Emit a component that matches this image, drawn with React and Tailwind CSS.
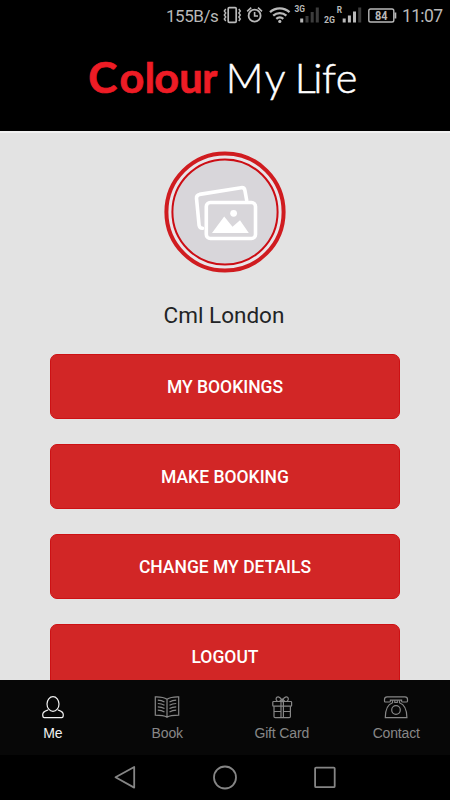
import React, { useState } from "react";

const actions = ["MY BOOKINGS", "MAKE BOOKING", "CHANGE MY DETAILS", "LOGOUT"];

function StatusBar() {
  return (
    <div className="flex h-8 shrink-0 items-center bg-black pl-[166px] font-['Roboto',sans-serif] text-[#b9b9b9]">
      <span className="w-[57px] whitespace-nowrap text-[17px] leading-8 tracking-[-0.45px]">155B/s</span>

      {/* Vibrate, alarm, wifi */}
      <svg className="h-8 w-[70px] shrink-0" viewBox="223 0 70 32" fill="none" stroke="currentColor">
        <rect x="228.2" y="7.7" width="8" height="14.6" rx="1" strokeWidth="1.7" />
        <path d="M225.8 9l-1.5 2 1.5 2-1.5 2 1.5 2-1.5 2 1.5 2M238.8 9l1.5 2-1.5 2 1.5 2-1.5 2 1.5 2-1.5 2" strokeWidth="1.4" />
        <circle cx="254.6" cy="15.7" r="6" strokeWidth="1.8" />
        <path d="M254.6 12v4h3.4M247.2 11.4l4-3.7M262 11.4l-4-3.7" strokeWidth="1.6" />
        <path d="M270 12.2c5.5-5.2 14-5.2 19.5 0M273.2 15.6c3.8-3.4 9.4-3.4 13.2 0M276.3 18.8c2-1.7 5-1.7 7 0" strokeWidth="2.3" />
        <circle cx="279.8" cy="21.4" r="1.6" fill="currentColor" stroke="none" />
      </svg>

      {/* Mobile signals */}
      <svg className="h-8 w-[73px] shrink-0 font-bold" viewBox="293 0 73 32" fill="currentColor">
        <text x="294.5" y="11.5" fontSize="9" textLength="10.5" lengthAdjust="spacingAndGlyphs">3G</text>
        <path d="M300.2 18.5h3v4h-3z" />
        <path d="M305.5 16h3v6.5h-3zM310.7 12h3v10.5h-3zM315.8 7.5h3v15h-3z" fill="#3c3c3c" />
        <text x="324" y="22.8" fontSize="9" textLength="11" lengthAdjust="spacingAndGlyphs">2G</text>
        <text x="336.7" y="12.7" fontSize="9.5" textLength="5.3" lengthAdjust="spacingAndGlyphs">R</text>
        <path d="M342.7 18.5h3v4h-3zM347.9 15.5h3v7h-3zM353 11.5h3v11h-3z" />
        <path d="M358.2 7.5h3v15h-3z" fill="#3c3c3c" />
      </svg>

      {/* Battery */}
      <svg className="h-8 w-9 shrink-0 font-bold" viewBox="366 0 36 32" fill="currentColor">
        <rect x="368.8" y="9" width="25" height="13" rx="1.8" fill="none" stroke="currentColor" strokeWidth="1.4" />
        <path d="M394.5 12.5h1.8v6h-1.8z" />
        <text x="375" y="19.8" fontSize="12" textLength="12.5" lengthAdjust="spacingAndGlyphs">84</text>
      </svg>
      <span className="whitespace-nowrap text-[17.5px] leading-8 tracking-[-0.65px]">11:07</span>
    </div>
  );
}

function Logo() {
  return (
    <header className="h-[99px] shrink-0 bg-black">
      <svg className="h-[99px] w-full font-['Lato',sans-serif]" viewBox="0 32 450 99">
        <text y="92.5" fontSize="41.5" fontWeight="700" fill="#ee1c25" stroke="#ee1c25" strokeWidth="0.7">
          <tspan x="88.3" textLength="29" lengthAdjust="spacingAndGlyphs">C</tspan>
          <tspan x="119.5" textLength="24.8" lengthAdjust="spacingAndGlyphs">o</tspan>
          <tspan x="144.7">l</tspan>
          <tspan x="154.3" textLength="24.8" lengthAdjust="spacingAndGlyphs">o</tspan>
          <tspan x="179.3">u</tspan>
          <tspan x="202.2" textLength="15" lengthAdjust="spacingAndGlyphs">r</tspan>
        </text>
        <text x="225.8 264.8 284 294.8 313.3 322 335.7" y="92.5" fontSize="41.5" fontWeight="300" fill="#fff" stroke="#fff" strokeWidth="0.5">
          My Life
        </text>
      </svg>
    </header>
  );
}

function Avatar() {
  return (
    <svg className="h-[122px] w-[122px] shrink-0" viewBox="164 151.5 122 122" fill="none">
      <circle cx="225" cy="212.5" r="58.6" fill="#e8e5e9" stroke="#d01c20" strokeWidth="4" />
      <circle cx="225" cy="212.5" r="52.6" fill="#d8d6da" stroke="#cc0d14" strokeWidth="2" />
      <g stroke="#fff" strokeWidth="3.6" strokeLinejoin="round">
        <path d="M202.5 228.8q-2.8-.2-3.4-3l-2.6-27q-.2-3.3 3-3.9l41.6-6.7q3.2-.4 3.8 2.6l1.8 10" strokeLinecap="round" />
        <rect x="206.3" y="203" width="49.2" height="36" rx="4" />
      </g>
      <circle cx="233.6" cy="213.8" r="3.4" fill="#fff" />
      <path d="M212 233.5l12.2-16.6 8.3 10.4 7.5-6.6 8.8 12.8z" fill="#fff" />
    </svg>
  );
}

function UserIcon() {
  return (
    <svg className="h-6 w-7" viewBox="0 0 28 24" fill="none" stroke="currentColor" strokeWidth="1.2">
      <ellipse cx="14" cy="9" rx="6" ry="7.4" />
      <path d="M9.2 15c-2.4.7-5.5 1.3-5.5 4.8 0 1.7.5 2.9 1.6 2.9h17.4c1.1 0 1.6-1.2 1.6-2.9 0-3.5-3.1-4.1-5.5-4.8" />
    </svg>
  );
}

function BookIcon() {
  return (
    <svg className="h-6 w-7" viewBox="0 0 28 24" fill="none" stroke="currentColor" strokeWidth="1.2">
      <path d="M14 4.2C11 2.1 7 1.7 2.3 1.8v18.4c4.7 0 8.7.2 11.7 2 3-1.8 7-2 11.7-2V1.8C21 1.7 17 2.1 14 4.2zM14 4.2v18" />
      <path d="M4.8 5.2c2.6 0 4.8.6 6.7 1.8M4.8 8.5c2.6 0 4.8.6 6.7 1.8M4.8 11.8c2.6 0 4.8.6 6.7 1.8M4.8 15.1c2.6 0 4.8.6 6.7 1.8M23.2 5.2c-2.6 0-4.8.6-6.7 1.8M23.2 8.5c-2.6 0-4.8.6-6.7 1.8M23.2 11.8c-2.6 0-4.8.6-6.7 1.8M23.2 15.1c-2.6 0-4.8.6-6.7 1.8" />
    </svg>
  );
}

function GiftIcon() {
  return (
    <svg className="h-6 w-7" viewBox="0 0 28 24" fill="none" stroke="currentColor" strokeWidth="1.2">
      <rect x="4.8" y="6.5" width="18.8" height="4.7" rx=".8" />
      <path d="M6 11.2v10.3q0 1.2 1.2 1.2h14q1.2 0 1.2-1.2V11.2M13 6.5v16.2M15.4 6.5v16.2M6 16.5h7M15.4 16.5h7" />
      <path d="M9.3 6.3C7 4.2 8.2 1.7 10.3 1.9c2 .2 3 2.3 3.9 4.4.9-2.1 1.9-4.2 3.9-4.4 2.1-.2 3.3 2.3 1 4.4M11.7 6.3l2.5-2.2 2.5 2.2" />
    </svg>
  );
}

function PhoneIcon() {
  return (
    <svg className="h-6 w-7" viewBox="0 0 28 24" fill="none" stroke="currentColor" strokeWidth="1.2">
      <path d="M5.1 1.8h17.8c1.6 0 2.6 1 2.6 2.6v1.5q0 1.1-1.1 1.1h-3.7q-1.1 0-1.1-1.1v-.7H8.4v.7Q8.4 7 7.3 7H3.6Q2.5 7 2.5 5.9V4.4c0-1.6 1-2.6 2.6-2.6z" />
      <path d="M10.5 5.2v2.5C5.8 9.3 3.3 14 3.3 22.6h21.6c0-8.6-2.7-13.3-7.4-14.9V5.2M12.8 5.2v2.3h2.5V5.2" />
      <circle cx="14" cy="15" r="4.3" />
    </svg>
  );
}

const tabs = [
  { name: "Me", icon: <UserIcon /> },
  { name: "Book", icon: <BookIcon /> },
  { name: "Gift Card", icon: <GiftIcon /> },
  { name: "Contact", icon: <PhoneIcon /> },
];

export default function App() {
  const [activeTab, setActiveTab] = useState("Me");

  return (
    <div className="flex h-[800px] w-[450px] flex-col overflow-hidden bg-black">
      <StatusBar />
      <Logo />

      {/* Profile */}
      <main className="flex min-h-0 flex-1 flex-col items-center overflow-hidden border-t-2 border-[#f1f1f1] bg-[#e3e3e3] px-[50px] pt-[18px] font-['Roboto',sans-serif]">
        <Avatar />
        <h1 className="mt-[26px] mb-[22.5px] h-8 shrink-0 pr-[2px] text-[22.5px] leading-8 text-[#222426]">
          Cml London
        </h1>
        <div className="flex w-full flex-col gap-[25px]">
          {actions.map((action) => (
            <button
              key={action}
              className="h-[65px] w-full shrink-0 rounded-[7px] border border-[#cd1114] bg-[#d22626] pt-[3px] text-[17.5px] font-medium text-white"
            >
              {action}
            </button>
          ))}
        </div>
      </main>

      {/* Tabs */}
      <nav className="-mx-1 flex h-[75px] shrink-0 bg-[#070707] font-['Liberation_Sans',sans-serif]">
        {tabs.map((tab) => (
          <button
            key={tab.name}
            onClick={() => setActiveTab(tab.name)}
            className={`flex flex-1 flex-col items-center pt-[15px] pr-px text-[14px] leading-5 tracking-[-0.15px] ${
              activeTab === tab.name ? "text-[#f2f2f2]" : "text-[#878787]"
            }`}
          >
            {tab.icon}
            <span className="mt-1">{tab.name}</span>
          </button>
        ))}
      </nav>

      {/* Android navigation */}
      <div className="flex h-[45px] shrink-0 items-center justify-center gap-[72px] bg-black text-[#858585]">
        <svg className="h-7 w-7" viewBox="0 0 28 28" fill="none" stroke="currentColor" strokeWidth="1.8">
          <path d="M23.2 3v20.6L4.5 13.3z" strokeLinejoin="round" />
        </svg>
        <svg className="h-7 w-7" viewBox="0 0 28 28" fill="none" stroke="currentColor" strokeWidth="1.8">
          <circle cx="14" cy="13.5" r="11" />
        </svg>
        <svg className="h-7 w-7" viewBox="0 0 28 28" fill="none" stroke="currentColor" strokeWidth="1.8">
          <rect x="4.1" y="3.6" width="19.6" height="19.6" rx="1" />
        </svg>
      </div>
    </div>
  );
}
